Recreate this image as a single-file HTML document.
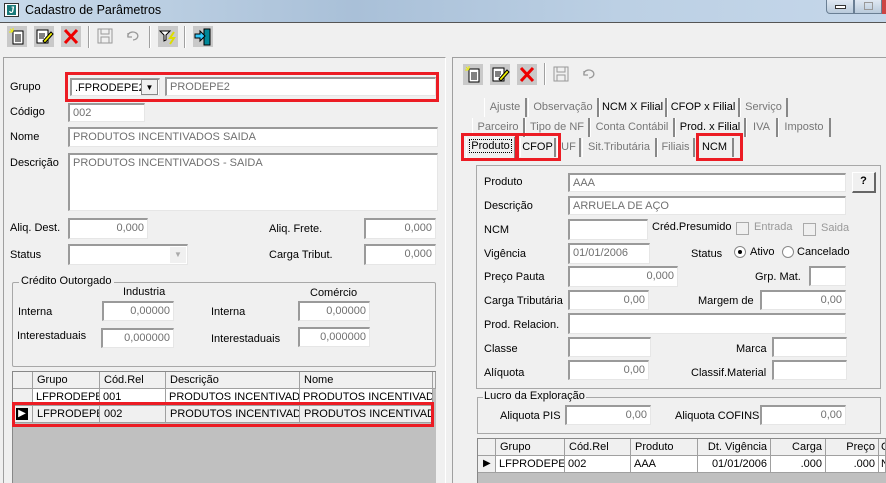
<!DOCTYPE html>
<html><head><meta charset="utf-8"><style>
*{margin:0;padding:0;box-sizing:border-box}
body{width:886px;height:483px;overflow:hidden;background:#f0f0f0;font-family:"Liberation Sans",Arial,sans-serif;font-size:11px;color:#000;position:relative}
.a{position:absolute;white-space:nowrap}
.f{position:absolute;background:#fff;border-top:2px solid #9a9a9a;border-left:2px solid #9a9a9a;border-bottom:1px solid #e6e6e6;border-right:1px solid #e6e6e6;color:#707070;padding:1px 3px;overflow:hidden;white-space:nowrap;line-height:15px}
.r{text-align:right}
.red{position:absolute;border:3px solid #ec1c24}
.ib{position:absolute;width:20px;height:21px;background:#c9c9c9}
.sep{position:absolute;width:2px;height:22px;border-left:1px solid #a0a0a0;border-right:1px solid #fff}
.gb{position:absolute;border:1px solid #a8a8a8;border-radius:2px}
.tab{position:absolute;height:19px;border-right:2px solid #888;line-height:18px;color:#777;text-align:center;border-left:1px solid #fff;overflow:hidden;white-space:nowrap}
.gh{position:absolute;border-right:1px solid #a0a0a0;border-bottom:1px solid #a0a0a0;background:#f0f0f0;padding-left:4px;line-height:16px;overflow:hidden;white-space:nowrap}
.gc{position:absolute;border-right:1px solid #a0a0a0;border-bottom:1px solid #a0a0a0;background:#fff;padding-left:3px;line-height:16px;overflow:hidden;white-space:nowrap}
</style></head><body>
<div class="a" style="left:0;top:0;width:886px;height:22px;background:linear-gradient(90deg,#c9daea,#a9c0d8 40%,#bcd0e4 70%,#c5d7ea)"></div>
<div class="a" style="left:4px;top:3px;width:15px;height:14px;background:#fff;border:1px solid #333"><div style="position:absolute;left:2px;top:1px;width:9px;height:10px;background:#1a7a7a;color:#fff;font-size:9px;font-weight:bold;text-align:center;line-height:10px;font-style:italic">J</div></div>
<div class="a" style="left:25px;top:3px;font-size:12.5px">Cadastro de Parâmetros</div>
<div class="a" style="left:826px;top:0;width:28px;height:14px;border:1px solid #6a7f94;border-top:none;border-radius:0 0 0 4px;background:linear-gradient(#dfe8f2,#b9cadb)"><div style="position:absolute;left:8px;top:5px;width:11px;height:4px;border:1px solid #333;background:#fff"></div></div>
<div class="a" style="left:854px;top:0;width:28px;height:14px;border:1px solid #6a7f94;border-top:none;background:linear-gradient(#dfe8f2,#b9cadb)"><div style="position:absolute;left:9px;top:2px;width:9px;height:8px;border:1px solid #999"></div></div>
<div class="a" style="left:882px;top:0;width:4px;height:14px;background:#c44"></div>
<div class="a" style="left:0;top:22px;width:886px;height:1px;background:#555"></div>
<div class="ib" style="left:7px;top:26px"><svg width="20" height="21"><rect x="6" y="5" width="10" height="13" fill="#fff" stroke="#000"/><path d="M8 9h6M8 11h6M8 13h6M8 15h6" stroke="#000"/><path d="M3 3l3 3M6 2v3M2 6h3" stroke="#ee0"/></svg></div>
<div class="ib" style="left:34px;top:26px"><svg width="20" height="21"><rect x="3" y="4" width="11" height="13" fill="#fff" stroke="#000"/><path d="M5 8h6M5 10h6M5 12h5" stroke="#000"/><path d="M9 15l8-9 2 2-8 9z" fill="#ee0" stroke="#000"/></svg></div>
<div class="ib" style="left:61px;top:26px"><svg width="20" height="21"><path d="M4 4l12 13M16 4L4 17" stroke="#e00" stroke-width="3"/></svg></div>
<div class="sep" style="left:88px;top:26px"></div>
<div class="a" style="left:97px;top:28px"><svg width="16" height="16"><rect x="1" y="1" width="14" height="14" fill="none" stroke="#999"/><rect x="4" y="1" width="8" height="5" fill="none" stroke="#999"/><rect x="4" y="9" width="8" height="6" fill="none" stroke="#999"/></svg></div>
<div class="a" style="left:126px;top:31px"><svg width="14" height="10"><path d="M2 6a5 4 0 1 1 5 3M2 2v4h4" fill="none" stroke="#999" stroke-width="1.3"/></svg></div>
<div class="sep" style="left:149px;top:26px"></div>
<div class="ib" style="left:158px;top:26px"><svg width="20" height="21"><path d="M2 5h10l-4 4v5l-2 1V9z" fill="#fff" stroke="#000"/><path d="M16 6l-4 6h4l-4 6" stroke="#dd0" stroke-width="2" fill="none"/></svg></div>
<div class="sep" style="left:184px;top:26px"></div>
<div class="ib" style="left:193px;top:26px"><svg width="20" height="21"><rect x="11" y="3" width="6" height="16" fill="#089" stroke="#000"/><path d="M2 8h5V5l5 5-5 5v-3H2z" fill="#3cf" stroke="#000"/></svg></div>
<div class="a" style="left:3px;top:57px;width:443px;height:426px;border-left:1px solid #a0a0a0;border-top:1px solid #a0a0a0;border-right:1px solid #fff"></div>
<div class="a" style="left:10px;top:81px">Grupo</div>
<div class="f" style="left:70px;top:78px;width:90px;height:18px;color:#000">.FPRODEPE2</div>
<div class="a" style="left:141px;top:79px;width:17px;height:16px;background:#f0f0f0;border:1px solid #888;font-size:8px;text-align:center;line-height:15px">▼</div>
<div class="f" style="left:165px;top:77px;width:271px;height:19px">PRODEPE2</div>
<div class="red" style="left:65px;top:72px;width:374px;height:30px"></div>
<div class="a" style="left:10px;top:106px">Código</div>
<div class="f" style="left:68px;top:103px;width:77px;height:19px">002</div>
<div class="a" style="left:10px;top:131px">Nome</div>
<div class="f" style="left:68px;top:127px;width:370px;height:20px">PRODUTOS INCENTIVADOS SAIDA</div>
<div class="a" style="left:10px;top:157px">Descrição</div>
<div class="f" style="left:68px;top:153px;width:370px;height:58px">PRODUTOS INCENTIVADOS - SAIDA</div>
<div class="a" style="left:10px;top:222px">Aliq. Dest.</div>
<div class="f r" style="left:68px;top:218px;width:80px;height:21px">0,000</div>
<div class="a" style="left:269px;top:223px">Aliq. Frete.</div>
<div class="f r" style="left:364px;top:218px;width:72px;height:21px">0,000</div>
<div class="a" style="left:10px;top:249px">Status</div>
<div class="f" style="left:68px;top:244px;width:120px;height:21px"></div>
<div class="a" style="left:170px;top:247px;width:16px;height:16px;background:#f0f0f0;font-size:8px;color:#aaa;text-align:center;line-height:16px">▼</div>
<div class="a" style="left:269px;top:249px">Carga Tribut.</div>
<div class="f r" style="left:364px;top:244px;width:72px;height:21px">0,000</div>
<div class="gb" style="left:12px;top:282px;width:424px;height:85px"></div>
<div class="a" style="left:19px;top:275px;background:#f0f0f0;padding:0 2px">Crédito Outorgado</div>
<div class="a" style="left:123px;top:286px">Industria</div>
<div class="a" style="left:310px;top:287px">Comércio</div>
<div class="a" style="left:18px;top:306px">Interna</div>
<div class="f r" style="left:102px;top:301px;width:72px;height:20px">0,00000</div>
<div class="a" style="left:211px;top:306px">Interna</div>
<div class="f r" style="left:298px;top:301px;width:72px;height:20px">0,00000</div>
<div class="a" style="left:17px;top:330px">Interestaduais</div>
<div class="f r" style="left:101px;top:328px;width:73px;height:20px">0,000000</div>
<div class="a" style="left:211px;top:333px">Interestaduais</div>
<div class="f r" style="left:298px;top:327px;width:72px;height:20px">0,000000</div>
<div class="a" style="left:12px;top:371px;width:424px;height:112px;background:#c0c0c0;border-left:1px solid #888;border-top:1px solid #888"></div>
<div class="gh" style="left:13px;top:372px;width:20px;height:17px;padding:0"></div>
<div class="gh" style="left:33px;top:372px;width:67px;height:17px">Grupo</div>
<div class="gh" style="left:100px;top:372px;width:66px;height:17px">Cód.Rel</div>
<div class="gh" style="left:166px;top:372px;width:134px;height:17px">Descrição</div>
<div class="gh" style="left:300px;top:372px;width:133px;height:17px">Nome</div>
<div class="gh" style="left:433px;top:372px;width:3px;height:17px;padding:0"></div>
<div class="gh" style="left:13px;top:389px;width:20px;height:17px;padding:0"></div>
<div class="gc" style="left:33px;top:389px;width:67px;height:17px">LFPRODEPE2</div>
<div class="gc" style="left:100px;top:389px;width:66px;height:17px">001</div>
<div class="gc" style="left:166px;top:389px;width:134px;height:17px">PRODUTOS INCENTIVADOS</div>
<div class="gc" style="left:300px;top:389px;width:133px;height:17px">PRODUTOS INCENTIVADOS</div>
<div class="gh" style="left:13px;top:406px;width:20px;height:17px;padding:0"><div style="margin:2px 0 0 3px;width:12px;height:12px;background:#000;color:#fff;font-size:10px;line-height:12px;text-align:center">▶</div></div>
<div class="gh" style="left:33px;top:406px;width:67px;height:17px">LFPRODEPE2</div>
<div class="gh" style="left:100px;top:406px;width:66px;height:17px">002</div>
<div class="gh" style="left:166px;top:406px;width:134px;height:17px">PRODUTOS INCENTIVADOS</div>
<div class="gh" style="left:300px;top:406px;width:133px;height:17px">PRODUTOS INCENTIVADOS</div>
<div class="red" style="left:12px;top:402px;width:422px;height:25px"></div>
<div class="a" style="left:452px;top:57px;width:434px;height:426px;border-left:1px solid #a0a0a0;border-top:1px solid #a0a0a0"></div>
<div class="ib" style="left:463px;top:64px"><svg width="20" height="21"><rect x="6" y="5" width="10" height="13" fill="#fff" stroke="#000"/><path d="M8 9h6M8 11h6M8 13h6M8 15h6" stroke="#000"/><path d="M3 3l3 3M6 2v3M2 6h3" stroke="#ee0"/></svg></div>
<div class="ib" style="left:490px;top:64px"><svg width="20" height="21"><rect x="3" y="4" width="11" height="13" fill="#fff" stroke="#000"/><path d="M5 8h6M5 10h6M5 12h5" stroke="#000"/><path d="M9 15l8-9 2 2-8 9z" fill="#ee0" stroke="#000"/></svg></div>
<div class="ib" style="left:517px;top:64px"><svg width="20" height="21"><path d="M4 4l12 13M16 4L4 17" stroke="#e00" stroke-width="3"/></svg></div>
<div class="sep" style="left:544px;top:63px"></div>
<div class="a" style="left:553px;top:66px"><svg width="16" height="16"><rect x="1" y="1" width="14" height="14" fill="none" stroke="#999"/><rect x="4" y="1" width="8" height="5" fill="none" stroke="#999"/><rect x="4" y="9" width="8" height="6" fill="none" stroke="#999"/></svg></div>
<div class="a" style="left:582px;top:69px"><svg width="14" height="10"><path d="M2 6a5 4 0 1 1 5 3M2 2v4h4" fill="none" stroke="#999" stroke-width="1.3"/></svg></div>
<div class="tab" style="left:484px;top:98px;width:43px">Ajuste</div>
<div class="tab" style="left:528px;top:98px;width:71px">Observação</div>
<div class="tab" style="left:599px;top:98px;width:68px;color:#000">NCM X Filial</div>
<div class="tab" style="left:667px;top:98px;width:73px;color:#000">CFOP x Filial</div>
<div class="tab" style="left:740px;top:98px;width:48px">Serviço</div>
<div class="tab" style="left:472px;top:118px;width:53px">Parceiro</div>
<div class="tab" style="left:525px;top:118px;width:65px">Tipo de NF</div>
<div class="tab" style="left:590px;top:118px;width:85px">Conta Contábil</div>
<div class="tab" style="left:675px;top:118px;width:71px;color:#000">Prod. x Filial</div>
<div class="tab" style="left:746px;top:118px;width:32px">IVA</div>
<div class="tab" style="left:778px;top:118px;width:53px">Imposto</div>
<div class="tab" style="left:466px;top:137px;width:50px;color:#000;background:#f0f0f0;height:21px"><span style="border:1px dotted #000;padding:0 1px">Produto</span></div>
<div class="tab" style="left:520px;top:138px;width:36px;color:#000">CFOP</div>
<div class="tab" style="left:557px;top:138px;width:24px">UF</div>
<div class="tab" style="left:582px;top:138px;width:75px">Sit.Tributária</div>
<div class="tab" style="left:657px;top:138px;width:38px">Filiais</div>
<div class="tab" style="left:696px;top:138px;width:38px;color:#000">NCM</div>
<div class="red" style="left:461px;top:133px;width:57px;height:28px"></div>
<div class="red" style="left:516px;top:133px;width:45px;height:28px"></div>
<div class="red" style="left:696px;top:133px;width:47px;height:28px"></div>
<div class="gb" style="left:476px;top:165px;width:405px;height:224px;border-radius:0"></div>
<div class="a" style="left:484px;top:176px">Produto</div>
<div class="f" style="left:568px;top:173px;width:278px;height:19px">AAA</div>
<div class="a" style="left:852px;top:172px;width:24px;height:21px;background:#f0f0f0;border:1px solid #fff;border-right:2px solid #666;border-bottom:2px solid #666;font-weight:bold;text-align:center;line-height:17px">?</div>
<div class="a" style="left:484px;top:200px">Descrição</div>
<div class="f" style="left:568px;top:196px;width:278px;height:19px">ARRUELA DE AÇO</div>
<div class="a" style="left:484px;top:224px">NCM</div>
<div class="f" style="left:568px;top:219px;width:80px;height:21px"></div>
<div class="a" style="left:652px;top:221px">Créd.Presumido</div>
<div class="a" style="left:736px;top:222px;width:13px;height:13px;border:1px solid #aaa"></div>
<div class="a" style="left:754px;top:221px;color:#999">Entrada</div>
<div class="a" style="left:803px;top:223px;width:13px;height:13px;border:1px solid #aaa"></div>
<div class="a" style="left:821px;top:222px;color:#999">Saida</div>
<div class="a" style="left:484px;top:248px">Vigência</div>
<div class="f" style="left:568px;top:243px;width:82px;height:21px">01/01/2006</div>
<div class="a" style="left:691px;top:248px">Status</div>
<div class="a" style="left:734px;top:246px;width:12px;height:12px;border:1px solid #888;border-radius:50%;background:#fff"><div style="margin:3px;width:4px;height:4px;border-radius:50%;background:#000"></div></div>
<div class="a" style="left:750px;top:246px">Ativo</div>
<div class="a" style="left:782px;top:246px;width:12px;height:12px;border:1px solid #888;border-radius:50%;background:#fff"></div>
<div class="a" style="left:797px;top:246px">Cancelado</div>
<div class="a" style="left:484px;top:271px">Preço Pauta</div>
<div class="f r" style="left:568px;top:266px;width:110px;height:21px">0,000</div>
<div class="a" style="left:755px;top:271px">Grp. Mat.</div>
<div class="f" style="left:809px;top:266px;width:37px;height:20px"></div>
<div class="a" style="left:484px;top:295px">Carga Tributária</div>
<div class="f r" style="left:568px;top:290px;width:81px;height:20px">0,00</div>
<div class="a" style="left:698px;top:295px">Margem de</div>
<div class="f r" style="left:760px;top:290px;width:86px;height:20px">0,00</div>
<div class="a" style="left:484px;top:319px">Prod. Relacion.</div>
<div class="f" style="left:568px;top:313px;width:278px;height:21px"></div>
<div class="a" style="left:484px;top:343px">Classe</div>
<div class="f" style="left:568px;top:337px;width:83px;height:20px"></div>
<div class="a" style="left:736px;top:343px">Marca</div>
<div class="f" style="left:772px;top:337px;width:75px;height:20px"></div>
<div class="a" style="left:484px;top:367px">Alíquota</div>
<div class="f r" style="left:568px;top:360px;width:81px;height:20px">0,00</div>
<div class="a" style="left:691px;top:367px">Classif.Material</div>
<div class="f" style="left:772px;top:360px;width:75px;height:20px"></div>
<div class="gb" style="left:477px;top:397px;width:404px;height:37px;border-radius:0"></div>
<div class="a" style="left:483px;top:390px;background:#f0f0f0;padding:0 1px">Lucro da Exploração</div>
<div class="a" style="left:500px;top:410px">Aliquota PIS</div>
<div class="f r" style="left:565px;top:405px;width:86px;height:20px">0,00</div>
<div class="a" style="left:675px;top:410px">Aliquota COFINS</div>
<div class="f r" style="left:760px;top:405px;width:86px;height:20px">0,00</div>
<div class="a" style="left:477px;top:438px;width:409px;height:45px;background:#c0c0c0;border-left:1px solid #888;border-top:1px solid #888"></div>
<div class="gh" style="left:478px;top:439px;width:18px;height:17px;padding:0"></div>
<div class="gh" style="left:496px;top:439px;width:69px;height:17px">Grupo</div>
<div class="gh" style="left:565px;top:439px;width:66px;height:17px">Cód.Rel</div>
<div class="gh" style="left:631px;top:439px;width:67px;height:17px">Produto</div>
<div class="gh r" style="left:698px;top:439px;width:73px;height:17px;padding-right:3px">Dt. Vigência</div>
<div class="gh r" style="left:771px;top:439px;width:55px;height:17px;padding-right:3px">Carga</div>
<div class="gh r" style="left:826px;top:439px;width:53px;height:17px;padding-right:3px">Preço</div>
<div class="gh" style="left:879px;top:439px;width:7px;height:17px;padding:0 0 0 2px">C</div>
<div class="gh" style="left:478px;top:456px;width:18px;height:17px;padding:0 0 0 5px;font-size:10px">▶</div>
<div class="gc" style="left:496px;top:456px;width:69px;height:17px;color:#000">LFPRODEPE2</div>
<div class="gc" style="left:565px;top:456px;width:66px;height:17px">002</div>
<div class="gc" style="left:631px;top:456px;width:67px;height:17px">AAA</div>
<div class="gc r" style="left:698px;top:456px;width:73px;height:17px;padding-right:3px">01/01/2006</div>
<div class="gc r" style="left:771px;top:456px;width:55px;height:17px;padding-right:3px">.000</div>
<div class="gc r" style="left:826px;top:456px;width:53px;height:17px;padding-right:3px">.000</div>
<div class="gc" style="left:879px;top:456px;width:7px;height:17px;padding:0 0 0 2px">N</div>
</body></html>
